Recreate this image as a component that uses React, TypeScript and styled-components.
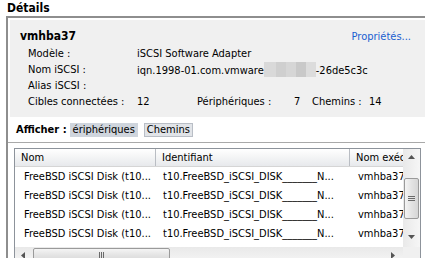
import styled, { createGlobalStyle } from 'styled-components'

const Global = createGlobalStyle`
  html, body {
    margin: 0;
    padding: 0;
    background: #fff;
  }
  body {
    width: 425px;
    height: 258px;
    overflow: hidden;
    font-family: "DejaVu Sans Condensed", "Liberation Sans", sans-serif;
    font-size: 11px;
    color: #000;
  }
`

/*---Layout---*/
const Page = styled.div`
  width: 425px;
  height: 258px;
  overflow: hidden;
`

const Title = styled.div`
  font-weight: bold;
  font-size: 12px;
  padding: 1px 0 0 7px;
  height: 15px;
  line-height: 14px;
`

const Frame = styled.div`
  margin-left: 6px;
  border-top: 2px solid #8e8e8e;
  border-left: 2px solid #8e8e8e;
  height: 260px;
  padding: 2px 0 0 2px;
`

const Summary = styled.div`
  background: #f0f0f0;
  height: 97px;
  padding: 9px 0 0 10px;
  box-sizing: border-box;
  position: relative;
`

const AdapterName = styled.div`
  font-weight: bold;
  font-size: 12px;
  line-height: 14px;
`

const Link = styled.a`
  position: absolute;
  right: 14px;
  top: 10px;
  color: #1a5fd0;
  cursor: pointer;
`

const Props = styled.div`
  display: grid;
  grid-template-columns: 109px 60px 97px 18px 57px auto;
  grid-auto-rows: 16px;
  padding-left: 8px;
  margin-top: 3px;
  line-height: 16px;
  white-space: nowrap;
`

const Wide = styled.span<{ $span?: number }>`
  grid-column: span ${p => p.$span || 1};
`

const Blur = styled.span`
  display: inline-block;
  width: 52px;
  height: 15px;
  vertical-align: -3px;
  background: linear-gradient(90deg, #d9d9d9 0 12px, #cfcfcf 12px 22px, #d6d6d6 22px 32px, #c9c9c9 32px 42px, #dcdcdc 42px);
`

const Toolbar = styled.div`
  display: flex;
  align-items: center;
  height: 17px;
  margin-top: 4px;
  padding-left: 6px;
`

const Label = styled.span`
  font-weight: bold;
  font-size: 11px;
  margin-right: 3px;
`

const Toggle = styled.span<{ $active?: boolean }>`
  display: inline-flex;
  align-items: center;
  height: 12px;
  padding: 0 2px;
  margin-right: 6px;
  background: ${p => (p.$active ? '#cfd5dd' : '#e1e4e8')};
  border: 1px solid ${p => (p.$active ? '#cfd5dd' : '#b9bec6')};
`

const Rule = styled.div`
  margin-top: 4px;
  border-top: 1px solid #a9a9a9;
  margin-left: -2px;
`

/*---Table---*/
const Table = styled.div`
  margin: 5px 0 0 4px;
  width: 407px;
  height: 117px;
  border: 1px solid #8d939b;
  box-sizing: border-box;
  display: grid;
  grid-template-columns: 1fr 17px;
  grid-template-rows: 1fr 17px;
  overflow: hidden;
`

const ListArea = styled.div`
  overflow: hidden;
  white-space: nowrap;
`

const HeaderRow = styled.div`
  display: flex;
  height: 17px;
  background: linear-gradient(#ffffff, #f3f4f5 50%, #e7e9ec);
  border-bottom: 1px solid #d5d5d5;
`

const HeaderCell = styled.div<{ $w: number }>`
  flex: 0 0 ${p => p.$w}px;
  padding-left: 6px;
  line-height: 17px;
  box-sizing: border-box;
  border-right: 1px solid #b9bdc3;
  overflow: hidden;
`

const Row = styled.div`
  display: flex;
  height: 19px;
  line-height: 19px;
`

const Cell = styled.div<{ $w: number; $pad: number }>`
  flex: 0 0 ${p => p.$w}px;
  padding-left: ${p => p.$pad}px;
  box-sizing: border-box;
  overflow: hidden;
`

const VScroll = styled.div`
  background: linear-gradient(90deg, #e9e9e9, #f6f6f6);
  position: relative;
`

const HScroll = styled.div`
  background: linear-gradient(#e9e9e9, #f6f6f6);
  position: relative;
`

const Corner = styled.div`
  background: #f0f0f0;
`

const Thumb = styled.div<{ $vertical?: boolean }>`
  position: absolute;
  box-sizing: border-box;
  border: 1px solid #9a9a9a;
  border-radius: 2px;
  background: ${p =>
    p.$vertical
      ? 'linear-gradient(90deg, #f4f4f4, #e3e3e3 50%, #d6d6d6)'
      : 'linear-gradient(#f4f4f4, #e3e3e3 50%, #d6d6d6)'};
  display: flex;
  align-items: center;
  justify-content: center;
`

const Arrow = styled.svg`
  position: absolute;
`

const cols = [141, 194, 60]
const pads = [9, 7, 8]

const rows = Array.from({ length: 5 }, (_, i) => ({
  name: 'FreeBSD iSCSI Disk (t10...',
  id: i < 4 ? 't10.FreeBSD_iSCSI_DISK_______N...' : 't10.FreeBSD_iSCSI_DISK_______T...',
  runtime: 'vmhba37',
}))

export default function App() {
  return (
    <Page>
      <Global />
      <Title>Détails</Title>
      <Frame>
        <Summary>
          <AdapterName>vmhba37</AdapterName>
          <Link>Propriétés...</Link>
          <Props>
            <span>Modèle :</span>
            <Wide $span={5}>iSCSI Software Adapter</Wide>
            <span>Nom iSCSI :</span>
            <Wide $span={5}>
              iqn.1998-01.com.vmware<Blur />-26de5c3c
            </Wide>
            <Wide $span={6}>Alias iSCSI :</Wide>
            <span>Cibles connectées :</span>
            <span>12</span>
            <span>Périphériques :</span>
            <span>7</span>
            <span>Chemins :</span>
            <span>14</span>
          </Props>
        </Summary>
        <Toolbar>
          <Label>Afficher :</Label>
          <Toggle $active>ériphériques</Toggle>
          <Toggle>Chemins</Toggle>
        </Toolbar>
        <Rule />
        <Table>
          <ListArea>
            <HeaderRow>
              <HeaderCell $w={cols[0]}>Nom</HeaderCell>
              <HeaderCell $w={cols[1]}>Identifiant</HeaderCell>
              <HeaderCell $w={cols[2]}>Nom exécution</HeaderCell>
            </HeaderRow>
            {rows.map((r, i) => (
              <Row key={i}>
                <Cell $w={cols[0]} $pad={pads[0]}>{r.name}</Cell>
                <Cell $w={cols[1]} $pad={pads[1]}>{r.id}</Cell>
                <Cell $w={cols[2]} $pad={pads[2]}>{r.runtime}</Cell>
              </Row>
            ))}
          </ListArea>
          <VScroll>
            <Arrow width="7" height="4" viewBox="0 0 7 4" style={{ left: 5, top: 6 }}>
              <path d="M0 4 L3.5 0 L7 4 Z" fill="#555" />
            </Arrow>
            <Thumb $vertical style={{ left: 1, right: 1, top: 29, height: 41 }}>
              <svg width="7" height="7" viewBox="0 0 7 7">
                <path d="M0 1.5H7M0 3.5H7M0 5.5H7" stroke="#6a6a6a" strokeWidth="1" />
              </svg>
            </Thumb>
            <Arrow width="7" height="4" viewBox="0 0 7 4" style={{ left: 5, bottom: 8 }}>
              <path d="M0 0 L3.5 4 L7 0 Z" fill="#555" />
            </Arrow>
          </VScroll>
          <HScroll>
            <Arrow width="4" height="7" viewBox="0 0 4 7" style={{ left: 6, top: 5 }}>
              <path d="M4 0 L0 3.5 L4 7 Z" fill="#555" />
            </Arrow>
            <Thumb style={{ left: 18, width: 137, top: 1, bottom: 1 }}>
              <svg width="7" height="7" viewBox="0 0 7 7">
                <path d="M1.5 0V7M3.5 0V7M5.5 0V7" stroke="#6a6a6a" strokeWidth="1" />
              </svg>
            </Thumb>
            <Arrow width="4" height="7" viewBox="0 0 4 7" style={{ right: 8, top: 5 }}>
              <path d="M0 0 L4 3.5 L0 7 Z" fill="#555" />
            </Arrow>
          </HScroll>
          <Corner />
        </Table>
      </Frame>
    </Page>
  )
}
